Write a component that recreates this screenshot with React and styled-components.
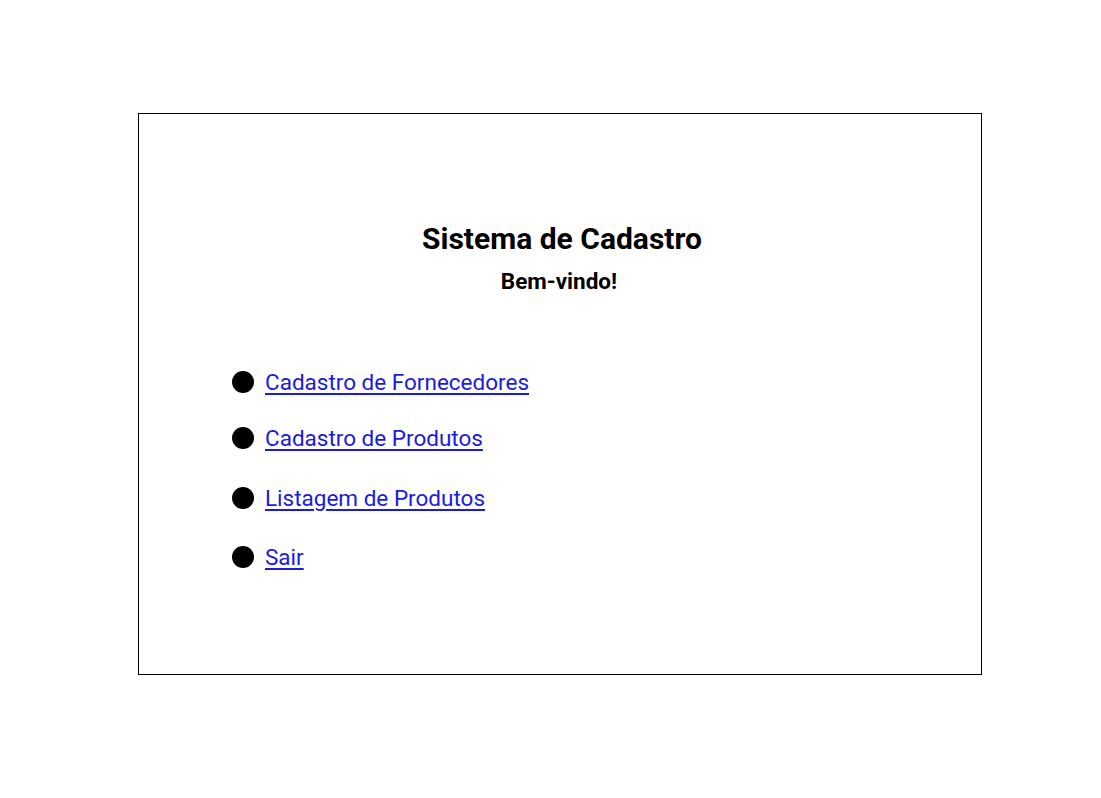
import React from "react";
import styled, { createGlobalStyle } from "styled-components";

const GlobalStyle = createGlobalStyle`
    body {
        margin: 0;
        background: #ffffff;
        font-family: Roboto, "Liberation Sans", sans-serif;
    }
`;

const Page = styled.div`
    width: 1101px;
    height: 798px;
    padding: 113px 0 0 138px;
    box-sizing: border-box;
`;

const Frame = styled.div`
    width: 844px;
    height: 562px;
    box-sizing: border-box;
    border: 1px solid #000;
    padding: 107px 0 0 4px;
    display: flex;
    flex-direction: column;
`;

const Title = styled.h1`
    margin: 0;
    font-size: 30px;
    line-height: 36px;
    font-weight: 700;
    text-align: center;
    color: #000;
`;

const Subtitle = styled.h2`
    margin: 11px 0 0 0;
    padding-right: 6px;
    font-size: 22.5px;
    line-height: 26px;
    font-weight: 700;
    text-align: center;
    color: #000;
`;

const Menu = styled.ul`
    list-style: none;
    margin: 75px 0 0 0;
    padding: 0 0 0 89px;
    display: flex;
    flex-direction: column;
`;

const MenuItem = styled.li`
    display: flex;
    align-items: center;
    gap: 11px;
    height: 26px;
    margin-top: ${({ $space }) => $space}px;
`;

const Dot = styled.span`
    width: 22px;
    height: 22px;
    border-radius: 50%;
    background: #000;
    flex-shrink: 0;
`;

const MenuLink = styled.a`
    font-size: 22.5px;
    line-height: 26px;
    color: #1a1ae0;
    text-decoration: underline;
    text-underline-offset: 3px;
`;

const items = [
    { label: "Cadastro de Fornecedores", space: 0 },
    { label: "Cadastro de Produtos", space: 30 },
    { label: "Listagem de Produtos", space: 34 },
    { label: "Sair", space: 33 },
];

export default function App() {
    return (
        <>
            <GlobalStyle />
            <Page>
                <Frame>
                    <Title>Sistema de Cadastro</Title>
                    <Subtitle>Bem-vindo!</Subtitle>
                    <Menu>
                        {items.map((item) => (
                            <MenuItem key={item.label} $space={item.space}>
                                <Dot />
                                <MenuLink href="#">{item.label}</MenuLink>
                            </MenuItem>
                        ))}
                    </Menu>
                </Frame>
            </Page>
        </>
    );
}
